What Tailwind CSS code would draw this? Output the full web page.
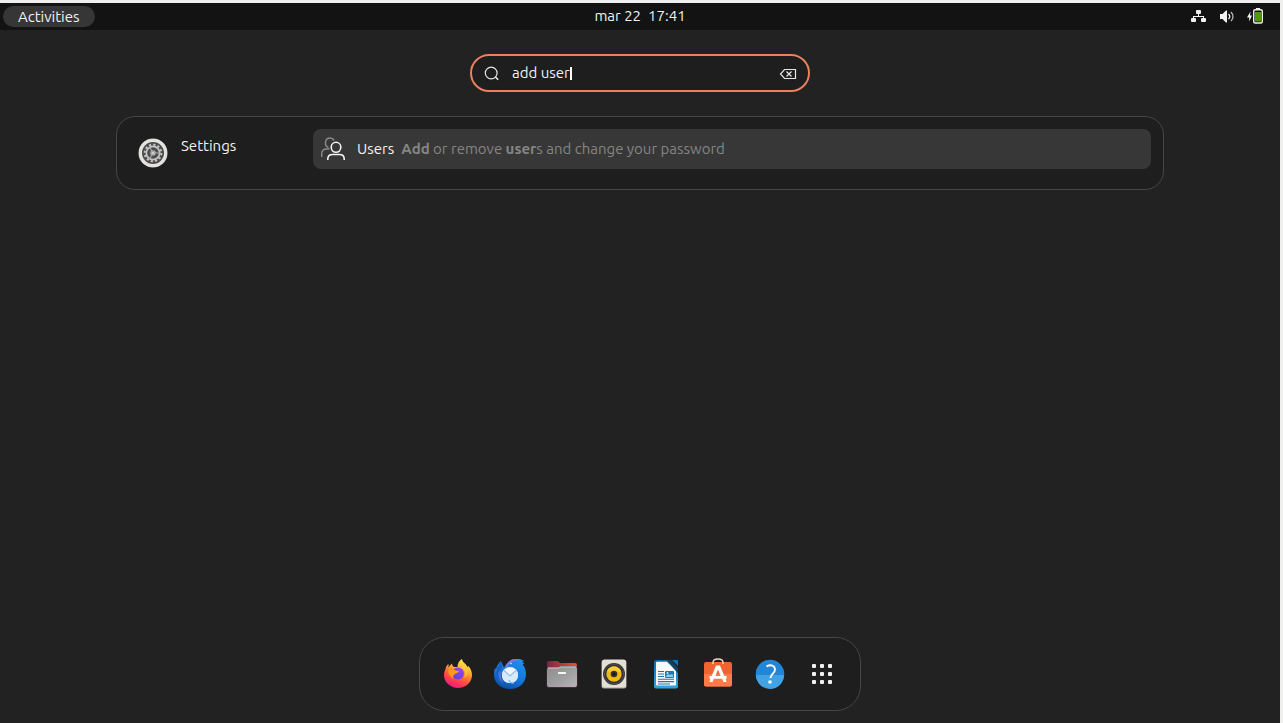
<!DOCTYPE html>
<html lang="en">
<head>
<meta charset="utf-8">
<meta name="viewport" content="width=device-width, initial-scale=1">
<title>Activities</title>
<script src="https://cdn.jsdelivr.net/npm/@tailwindcss/browser@4"></script>
</head>
<body class="flex min-h-screen flex-col border-t-3 border-r-3 border-[#efefed] bg-[#222222] font-['Ubuntu','Noto_Sans',sans-serif] text-[15px] text-[#f2f2f2]">
<header class="grid h-[27px] grid-cols-3 items-center bg-[#131313]">
  <button class="ml-[3px] h-[21px] justify-self-start rounded-full bg-[#363636] px-[15px] leading-5">Activities</button>
  <button class="flex gap-[7px] justify-self-center pb-px leading-5"><span>mar 22</span><span>17:41</span></button>
  <div class="mr-4 flex items-center gap-3 justify-self-end pb-px">
    <button aria-label="Wired network"><svg class="block h-4 w-4" viewBox="0 0 16 16" fill="#f2f2f2"><rect x="6" y="2" width="5" height="4" rx="1"/><rect x="1" y="10" width="5" height="4" rx="1"/><rect x="11" y="10" width="5" height="4" rx="1"/><path d="M8 5h1v3h5v3h-1V9H4v2H3V8h5z"/></svg></button>
    <button aria-label="Volume"><svg class="block h-4 w-4" viewBox="0 0 16 16" fill="none" stroke="#f2f2f2"><path d="M2 6h2.500L8 2.500h1v12H8L4.500 11H2z" fill="#f2f2f2" stroke="none"/><path d="M10.500 6q2.500 2.500 0 5" stroke-width="1.300"/><path d="M13 4q4 4.500 0 9" stroke-width="1.300" stroke="#b5b5b5"/></svg></button>
    <button aria-label="Battery charging"><svg class="block h-4 w-[18px]" viewBox="0 0 18 16"><path d="M4.500 3.500 1 9.500h2.200v4L6 7.500H4z" fill="#f2f2f2"/><path d="M10 0h4v2h-4z" fill="#f2f2f2"/><rect x="7.700" y="1.700" width="8.600" height="13.300" rx="1.500" fill="#131313" stroke="#f2f2f2" stroke-width="1.400"/><rect x="9" y="4" width="6" height="9.500" fill="#4e9a06"/></svg></button>
  </div>
</header>

<main class="flex flex-1 flex-col items-center px-6 pt-6 pb-3">
  <div class="flex h-[38px] w-full max-w-[340px] items-center rounded-[19px] border-2 border-[#e9815c] bg-[#1e1e1e] pr-[11px] pl-3">
    <svg class="h-4 w-4 shrink-0" viewBox="0 0 16 16" fill="none" stroke="#e8e8e8" stroke-width="1.200"><circle cx="7.200" cy="8" r="5.900"/><path d="m11.500 12 2.700 2.700" stroke-width="1.600"/></svg>
    <label class="ml-3 flex min-w-0 flex-1 cursor-text items-center">
      <input type="text" aria-label="Search" value="add user" class="field-sizing-content max-w-full leading-5 caret-transparent outline-none">
      <span class="h-[13px] w-[2px] bg-white" aria-hidden="true"></span>
    </label>
    <button aria-label="Clear search"><svg class="block h-4 w-[18px]" viewBox="0 0 18 16" fill="none" stroke="#e8e8e8" stroke-width="1.200"><path d="M5.500 4.500h11v9h-11L1.500 9z"/><path d="m7.500 6.500 5 5m0-5-5 5"/></svg></button>
  </div>

  <section aria-label="Search results" class="mt-6 flex min-h-[74px] w-full max-w-[1048px] items-start rounded-[19px] border border-[#464646] bg-[#1e1e1e] px-3 pt-3 pb-5">
    <button class="flex w-[184px] shrink-0 items-start gap-3 pt-[7px] pl-2 text-left">
      <svg class="mt-px h-[32px] w-[32px]" viewBox="0 0 32 32"><circle cx="16" cy="16" r="14.500" fill="#cfcdcb"/><circle cx="16" cy="16" r="14" fill="#e4e3e2"/><circle cx="16" cy="16" r="11" fill="#4c4c4c"/><circle cx="16" cy="16" r="8.300" fill="none" stroke="#c4c4c4" stroke-width="2" stroke-dasharray="2.180 2.170"/><circle cx="16" cy="16" r="6.700" fill="none" stroke="#c4c4c4" stroke-width="1.800"/><path d="m12.500 10 3.500 6-3.500 6M16 16h7" fill="none" stroke="#aaa" stroke-width="1.200"/><circle cx="16" cy="16" r="2.800" fill="#aaa"/><circle cx="16" cy="16" r="1" fill="#d6d6d6"/></svg>
      <span class="leading-5">Settings</span>
    </button>
    <button class="flex h-10 min-w-0 flex-1 items-center rounded-lg bg-[#373737] px-2 text-left">
      <svg class="h-6 w-6 shrink-0" viewBox="0 0 24 24" fill="none" stroke-width="1.400"><g stroke="#898989"><path d="M7.500 10.500C5.500 10 4.300 8 4.500 5.500 4.700 3 6.500 1 9 1c1.800 0 3.300 1 4 2.600"/><path d="M.7 20v-3c0-3 2-5 5.300-5h2.500"/></g><g stroke="#f4f4f4" stroke-width="1.600"><ellipse cx="15" cy="10.300" rx="4.800" ry="5"/><path d="M6.800 23v-1c0-3 2-4.500 4.700-4.500h7c2.700 0 4.700 1.500 4.700 4.500v1"/></g></svg>
      <span class="ml-3 leading-5">Users</span>
      <span class="ml-[7px] truncate leading-5 text-[#858585]"><b>Add</b> or remove <b>user</b>s and change your password</span>
    </button>
  </section>

  <nav aria-label="Dash" class="mt-auto flex h-[74px] items-center rounded-[25px] border border-[#464646] bg-[#1e1e1e] px-3">
    <button aria-label="Firefox" class="flex w-[52px] justify-center"><svg class="h-8 w-8" viewBox="0 0 32 32"><defs><linearGradient id="ffA" x1=".8" y1="0" x2=".35" y2="1"><stop offset="0" stop-color="#fff44f"/><stop offset=".35" stop-color="#ffb52d"/><stop offset=".65" stop-color="#ff5b36"/><stop offset="1" stop-color="#f21580"/></linearGradient><linearGradient id="ffB" x1="1" y1="0" x2="0" y2="1"><stop stop-color="#a040ff"/><stop offset="1" stop-color="#5446c9"/></linearGradient></defs><path d="M3.500 11C4 8.500 5 7 6.500 6v3.500C8 7 9 6.500 10 5.500c0 2 1 3 2.500 3.500h3C15.500 5 17.500 2.500 20 1c.5 4 4 4 5.500 8l1-1c2.500 3 3.500 6 3.500 9.500C29.500 25 23.500 30 16 30S2 24.500 2 17c0-2 .5-4 1.500-6z" fill="url(#ffA)"/><circle cx="16" cy="15.500" r="6" fill="url(#ffB)"/><path d="M6 13c2-1.500 4-2 6-1.500 1.500 1.500 4 1 5 1.500-.5 2-3 2-4 3-2 1-2.500 3-1.500 5C8.500 19.500 7 16.500 6 13z" fill="#ff9a20"/><path d="M20 10c4 2 4 7 1.500 10 3-1 4.500-4 4-7-.5-4-4-5-5.500-7z" fill="#ffd23d" opacity=".6"/></svg></button>
    <button aria-label="Thunderbird" class="flex w-[52px] justify-center"><svg class="h-8 w-8" viewBox="0 0 32 32"><defs><linearGradient id="tb" x1=".8" y1="0" x2=".3" y2="1"><stop stop-color="#1f8fee"/><stop offset=".6" stop-color="#1673d8"/><stop offset="1" stop-color="#0b4da0"/></linearGradient></defs><path d="M1 10l1 1C3 7 5 5 7 3c.5 2 2 3.500 2.500 6l1.500-.5C13 4 17 1 22 1c3 0 5 .3 8.500 2L28 3.500l2.500 2-2 .5c2.500 3 3.500 7 3.500 10 0 9-7 15-16 15S0 25 0 17c0-2 0-5 1-7z" fill="url(#tb)"/><path d="M11 9.500C13 4 17 1 22 1c2 0 4 .4 6 1-6-.3-11 1-14 6z" fill="#8b75df"/><path d="M7 4c1.500 3 1.500 5 0 8-2 4-2 9 0 14-4-4-6-9-4-15 1-3 2-5 4-7z" fill="#1762bd"/><path d="M4.500 14c-.5 5 1 9 5 12-2-4-3-8-2.500-13z" fill="#6b73d8" opacity=".7"/><circle cx="16" cy="17" r="8" fill="#f0f5ff"/><path d="m9 13 7 6 7-6 1 4c0 5-3 8-8 8s-8-3-8-8z" fill="#d8ebfc"/><path d="m10 12.500 6 5.500 6-5.500" fill="none" stroke="#91b9e9" stroke-width="1.200"/><path d="M15 22c1 3 3 3.500 5 2.500" fill="none" stroke="#7dbdf5" stroke-width="1.300"/><circle cx="17" cy="5.500" r=".8" fill="#d9ecff"/></svg></button>
    <button aria-label="Files" class="flex w-[52px] justify-center"><svg class="h-8 w-8" viewBox="0 0 32 32"><defs><linearGradient id="folder" x2="1"><stop stop-color="#792649"/><stop offset="1" stop-color="#e95420"/></linearGradient><linearGradient id="folderFront" x2="1" y2="1"><stop stop-color="#8c8c8c"/><stop offset=".55" stop-color="#a0a0a0"/><stop offset="1" stop-color="#b5b5b5"/></linearGradient></defs><path d="M1 5q0-2 2-2h8q1.500 0 3 2h15q2 0 2 2v8H1z" fill="url(#folder)"/><path d="M.5 11.500Q.5 9 3 9h9q1 0 2-1h15q2.500 0 2.500 2v17.500q0 2.500-2.500 2.500H3q-2.500 0-2.500-2.500z" fill="#53253d"/><path d="M1 11.500Q1 9.500 3 9.500h9q1 0 2-1h15q2 0 2 2V27q0 2-2 2H3q-2 0-2-2z" fill="url(#folderFront)"/><path d="M2 10h10.300l2-1H30" fill="none" stroke="#cacaca"/><rect x="12" y="14" width="8" height="2" rx=".5" fill="#f5f5f5"/></svg></button>
    <button aria-label="Rhythmbox" class="flex w-[52px] justify-center"><svg class="h-8 w-8" viewBox="0 0 32 32"><rect x="3.500" y="2" width="25" height="28.500" rx="2.500" fill="#aaa69c"/><rect x="4" y="1.500" width="24" height="28" rx="2.500" fill="#e3dfd3"/><circle cx="16" cy="16" r="11" fill="#393939"/><circle cx="16" cy="16" r="9.500" fill="#2b2b2d" stroke="#505059"/><circle cx="16" cy="16" r="7.700" fill="#edbb18"/><path d="M9 13c3-6 11-6 14 0l-4 1h-6z" fill="#f7cd2f"/><circle cx="16" cy="16" r="3.300" fill="#35322a"/><circle cx="16" cy="16" r="1.500" fill="#17191d"/></svg></button>
    <button aria-label="LibreOffice Writer" class="flex w-[52px] justify-center"><svg class="h-8 w-8" viewBox="0 0 32 32"><defs><linearGradient id="writer" x2="0" y2="1"><stop stop-color="#0d69a6"/><stop offset="1" stop-color="#36a5dc"/></linearGradient></defs><path d="M6 2h12l10 10v16.500q0 2-2 2H6q-2 0-2-2V4q0-2 2-2z" fill="url(#writer)"/><path d="M7 3.700h10l9 9.300v13.500q0 1-1 1H7q-1 0-1-1V4.700q0-1 1-1z" fill="#fafafa"/><path d="M17 2h4l7 8v5l-2-2z" fill="#173f5e"/><path d="M22 2h5.500q.5 0 .5.500V8z" fill="#1872aa"/><path d="M8 13.500h6M8 16h6M8 18.500h6M8 21.200h16M8 23.600h16M8 26h12" stroke="#1479b5" stroke-width="1.100"/><rect x="15" y="13" width="9" height="7" rx="1" fill="#137cba"/><path d="m16 18 2-2 2 1 2-1 1 1v2h-7z" fill="#91cce9"/><circle cx="17.500" cy="15" r="1" fill="#c2e8f8"/></svg></button>
    <button aria-label="Ubuntu Software" class="flex w-[52px] justify-center"><svg class="h-8 w-8" viewBox="0 0 32 32"><path d="M4 4h24q2 0 2 2v20.500q0 2-2 2H4q-2 0-2-2V6q0-2 2-2z" fill="#f06432"/><path d="M2 16h28v10.500q0 2-2 2H4q-2 0-2-2z" fill="#ff7b49"/><path d="M11 6V4.500q0-3.500 5-3.500t5 3.500V6" fill="none" stroke="#e8d9b5" stroke-width="1.500"/><path d="M14 7.500h4l4.500 11h-3.700L16 11.500l-2.800 7H9.500zM7.500 18h17v2.800h-17zM8.500 20h3.500l-1.500 4H7.500zm11.500 0h3.500l1 4h-3z" fill="#fff"/></svg></button>
    <button aria-label="Help" class="flex w-[52px] justify-center"><svg class="h-8 w-8" viewBox="0 0 32 32"><circle cx="16" cy="16" r="14.300" fill="#2385d6"/><path d="M2 17h28a14 14 0 0 1-28 0z" fill="#43a2e4"/><path d="M12.500 8.500c4-2.500 8.500-1 8.500 3 0 4.500-4.500 4-4.500 8.500" fill="none" stroke="#fff" stroke-width="1.800"/><circle cx="16" cy="24" r="1.800" fill="#fff"/></svg></button>
    <button aria-label="Show applications" class="flex w-[52px] justify-center"><svg class="h-8 w-8" viewBox="0 0 32 32" fill="#f2f2f2"><rect x="6" y="6" width="4" height="4" rx="1"/><rect x="14" y="6" width="4" height="4" rx="1"/><rect x="22" y="6" width="4" height="4" rx="1"/><rect x="6" y="14" width="4" height="4" rx="1"/><rect x="14" y="14" width="4" height="4" rx="1"/><rect x="22" y="14" width="4" height="4" rx="1"/><rect x="6" y="22" width="4" height="4" rx="1"/><rect x="14" y="22" width="4" height="4" rx="1"/><rect x="22" y="22" width="4" height="4" rx="1"/></svg></button>
  </nav>
</main>
</body>
</html>
